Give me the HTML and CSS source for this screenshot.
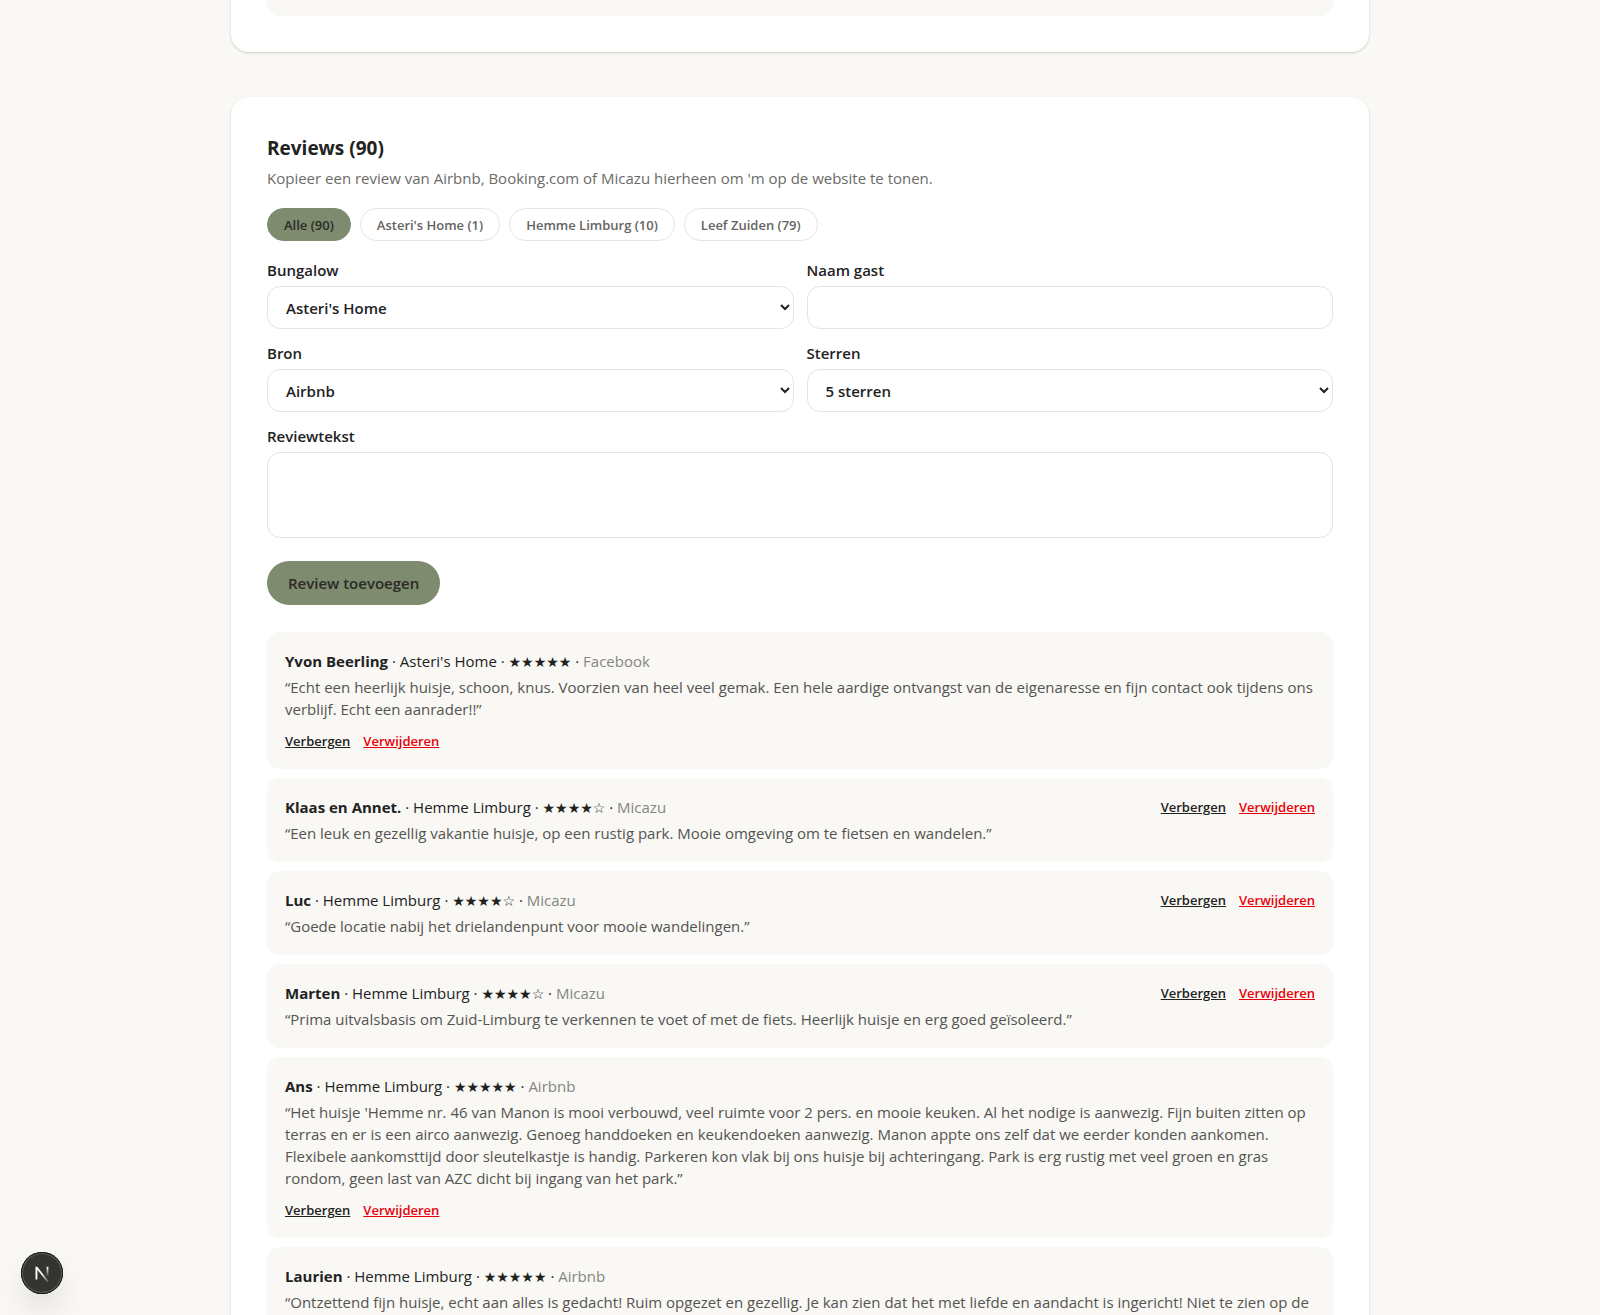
FILE: index.html
```html
<!DOCTYPE html>
<html lang="nl">
<head>
    <meta charset="UTF-8">
    <meta name="viewport" content="width=device-width, initial-scale=1.0">
    <title>Reviews beheren</title>
    <link rel="stylesheet" href="styles.css">
</head>
<body>
    <main class="page">
        <section class="card card-top">
            <div class="item item-end"></div>
        </section>

        <section class="card">
            <h2>Reviews (90)</h2>
            <p class="intro">Kopieer een review van Airbnb, Booking.com of Micazu hierheen om 'm op de website te tonen.</p>

            <div class="filters">
                <button type="button" class="chip active">Alle (90)</button>
                <button type="button" class="chip">Asteri's Home (1)</button>
                <button type="button" class="chip">Hemme Limburg (10)</button>
                <button type="button" class="chip">Leef Zuiden (79)</button>
            </div>

            <form class="form">
                <div class="field">
                    <label for="bungalow">Bungalow</label>
                    <select id="bungalow">
                        <option>Asteri's Home</option>
                        <option>Hemme Limburg</option>
                        <option>Leef Zuiden</option>
                    </select>
                </div>
                <div class="field">
                    <label for="naam">Naam gast</label>
                    <input type="text" id="naam">
                </div>
                <div class="field">
                    <label for="bron">Bron</label>
                    <select id="bron">
                        <option>Airbnb</option>
                        <option>Micazu</option>
                        <option>Facebook</option>
                    </select>
                </div>
                <div class="field">
                    <label for="sterren">Sterren</label>
                    <select id="sterren">
                        <option>5 sterren</option>
                        <option>4 sterren</option>
                    </select>
                </div>
                <div class="field wide">
                    <label for="tekst">Reviewtekst</label>
                    <textarea id="tekst"></textarea>
                </div>
                <button type="submit" class="submit">Review toevoegen</button>
            </form>

            <ul class="list">
                <li class="item">
                    <div class="review">
                        <p><strong>Yvon Beerling</strong> · Asteri's Home · <span class="stars">★★★★★</span> · <span class="source">Facebook</span></p>
                        <p class="quote">“Echt een heerlijk huisje, schoon, knus. Voorzien van heel veel gemak. Een hele aardige ontvangst van de eigenaresse en fijn contact ook tijdens ons verblijf. Echt een aanrader!!”</p>
                    </div>
                    <div class="actions">
                        <button type="button">Verbergen</button>
                        <button type="button" class="delete">Verwijderen</button>
                    </div>
                </li>
                <li class="item">
                    <div class="review">
                        <p><strong>Klaas en Annet.</strong> · Hemme Limburg · <span class="stars">★★★★☆</span> · <span class="source">Micazu</span></p>
                        <p class="quote">“Een leuk en gezellig vakantie huisje, op een rustig park. Mooie omgeving om te fietsen en wandelen.”</p>
                    </div>
                    <div class="actions">
                        <button type="button">Verbergen</button>
                        <button type="button" class="delete">Verwijderen</button>
                    </div>
                </li>
                <li class="item">
                    <div class="review">
                        <p><strong>Luc</strong> · Hemme Limburg · <span class="stars">★★★★☆</span> · <span class="source">Micazu</span></p>
                        <p class="quote">“Goede locatie nabij het drielandenpunt voor mooie wandelingen.”</p>
                    </div>
                    <div class="actions">
                        <button type="button">Verbergen</button>
                        <button type="button" class="delete">Verwijderen</button>
                    </div>
                </li>
                <li class="item">
                    <div class="review">
                        <p><strong>Marten</strong> · Hemme Limburg · <span class="stars">★★★★☆</span> · <span class="source">Micazu</span></p>
                        <p class="quote">“Prima uitvalsbasis om Zuid-Limburg te verkennen te voet of met de fiets. Heerlijk huisje en erg goed geïsoleerd.”</p>
                    </div>
                    <div class="actions">
                        <button type="button">Verbergen</button>
                        <button type="button" class="delete">Verwijderen</button>
                    </div>
                </li>
                <li class="item">
                    <div class="review">
                        <p><strong>Ans</strong> · Hemme Limburg · <span class="stars">★★★★★</span> · <span class="source">Airbnb</span></p>
                        <p class="quote">“Het huisje 'Hemme nr. 46 van Manon is mooi verbouwd, veel ruimte voor 2 pers. en mooie keuken. Al het nodige is aanwezig. Fijn buiten zitten op terras en er is een airco aanwezig. Genoeg handdoeken en keukendoeken aanwezig. Manon appte ons zelf dat we eerder konden aankomen. Flexibele aankomsttijd door sleutelkastje is handig. Parkeren kon vlak bij ons huisje bij achteringang. Park is erg rustig met veel groen en gras rondom, geen last van AZC dicht bij ingang van het park.”</p>
                    </div>
                    <div class="actions">
                        <button type="button">Verbergen</button>
                        <button type="button" class="delete">Verwijderen</button>
                    </div>
                </li>
                <li class="item">
                    <div class="review">
                        <p><strong>Laurien</strong> · Hemme Limburg · <span class="stars">★★★★★</span> · <span class="source">Airbnb</span></p>
                        <p class="quote">“Ontzettend fijn huisje, echt aan alles is gedacht! Ruim opgezet en gezellig. Je kan zien dat het met liefde en aandacht is ingericht! Niet te zien op de</p>
                    </div>
                    <div class="actions">
                        <button type="button">Verbergen</button>
                        <button type="button" class="delete">Verwijderen</button>
                    </div>
                </li>
            </ul>
        </section>
    </main>

    <button type="button" class="devtools" aria-label="Next.js">
        <svg width="42" height="42" viewBox="0 0 42 42" fill="none">
            <defs>
                <linearGradient id="diag" x1="21" y1="22" x2="28" y2="30" gradientUnits="userSpaceOnUse">
                    <stop stop-color="#fff"/>
                    <stop offset="1" stop-color="#fff" stop-opacity="0.1"/>
                </linearGradient>
                <linearGradient id="stem" x1="26" y1="15" x2="26" y2="25" gradientUnits="userSpaceOnUse">
                    <stop stop-color="#fff"/>
                    <stop offset="1" stop-color="#fff" stop-opacity="0"/>
                </linearGradient>
            </defs>
            <path d="M14.500 27.500V14.800H16.200L27.700 29.300L26.300 30.300L16.400 17.800V27.500Z" fill="url(#diag)"/>
            <path d="M26.500 14.800V25" stroke="url(#stem)" stroke-width="1.800"/>
        </svg>
    </button>
</body>
</html>
```
FILE: styles.css
```css
*{
    box-sizing: border-box;
}
body{
    margin: 0;
    background: #f9f8f4;
    color: #22221f;
    font-family: "Open Sans", "Noto Sans", sans-serif;
    font-size: 15px;
    line-height: 22px;
}
h2, p, ul{
    margin: 0;
    padding: 0;
}
button, input, select, textarea{
    font: inherit;
    color: inherit;
}
button{
    border: none;
    cursor: pointer;
}
.page{
    max-width: 1138px;
    margin: 0 auto;
}
.card{
    margin-bottom: 45px;
    padding: 36px;
    background: #fff;
    border-radius: 18px;
    box-shadow: 0 1px 3px rgba(34, 34, 31, 0.1), 0 1px 2px rgba(34, 34, 31, 0.1);
}
.card-top{
    padding-top: 0;
    border-radius: 0 0 18px 18px;
}
.card h2{
    font-size: 19px;
    line-height: 30px;
    font-weight: 700;
}
.intro{
    margin-top: 4px;
    color: #6b6b68;
}
.filters{
    display: flex;
    flex-wrap: wrap;
    gap: 9px;
    margin-top: 19px;
}
.chip{
    height: 33px;
    padding: 0 16px;
    border: 1px solid #e8e4da;
    border-radius: 17px;
    background: #fff;
    color: #646461;
    font-size: 13px;
    font-weight: 600;
}
.chip.active{
    border-color: #7f8b6f;
    background: #7f8b6f;
    color: #2a2a26;
}
.form{
    display: grid;
    grid-template-columns: 1fr 1fr;
    gap: 13px;
    margin-top: 18px;
}
.field{
    display: flex;
    flex-direction: column;
    gap: 5px;
    font-weight: 600;
}
.wide{
    grid-column: span 2;
}
.field input, .field select, .field textarea{
    width: 100%;
    height: 43px;
    padding: 0 18px;
    border: 1px solid #e8e4da;
    border-radius: 13px;
    background: #fff;
}
.field select{
    padding: 0 0 0 14px;
}
.field textarea{
    height: 86px;
    padding: 9px 18px;
    resize: none;
}
.submit{
    justify-self: start;
    height: 44px;
    margin-top: 10px;
    padding: 0 21px;
    border-radius: 22px;
    background: #7f8b6f;
    color: #2a2a26;
    font-weight: 600;
}
.list{
    display: flex;
    flex-direction: column;
    gap: 9px;
    margin-top: 27px;
    list-style: none;
}
.item{
    display: flex;
    flex-wrap: wrap;
    justify-content: space-between;
    align-items: flex-start;
    gap: 10px 13px;
    padding: 18px;
    border-radius: 13px;
    background: #f9f8f4;
}
.item-end{
    height: 16px;
    padding: 0;
    border-radius: 0 0 13px 13px;
}
.stars{
    font-family: "DejaVu Sans", sans-serif;
    font-size: 14px;
    line-height: 1;
}
.source{
    color: #858582;
}
.quote{
    margin-top: 4px;
    color: #545451;
}
.actions{
    display: flex;
    gap: 13px;
    padding-top: 1px;
}
.actions button{
    padding: 0;
    background: none;
    font-size: 13px;
    line-height: 20px;
    font-weight: 600;
    text-decoration: underline;
}
.actions .delete{
    color: #e7000b;
}
/* zwevende knop linksonder */
.devtools{
    position: fixed;
    left: 21px;
    bottom: 21px;
    width: 42px;
    height: 42px;
    padding: 0;
    border-radius: 50%;
    background: #343431;
    box-shadow: inset 0 0 0 1px #171717, inset 0 0 0 2px #5c5c59, 0 16px 32px -8px rgba(0, 0, 0, 0.24);
}
.devtools svg{
    display: block;
}
```
